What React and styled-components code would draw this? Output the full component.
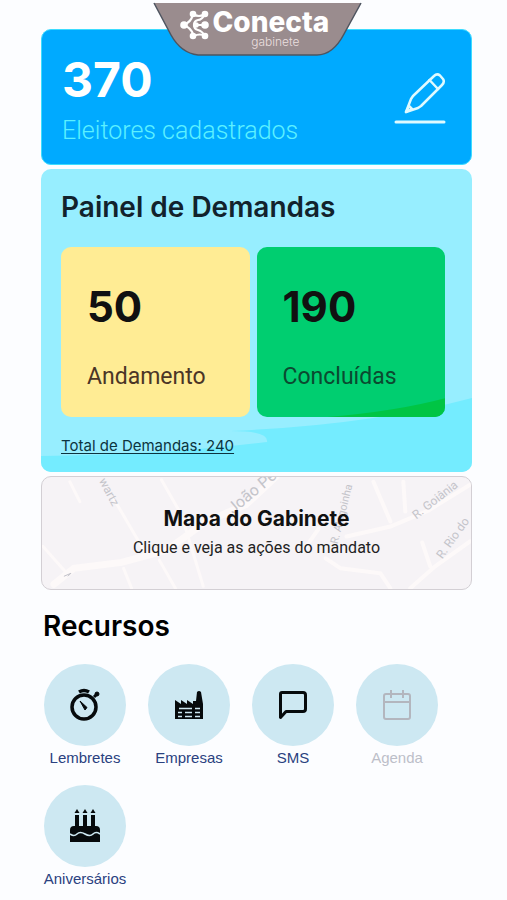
import React from "react";
import styled, { createGlobalStyle } from "styled-components";

const GlobalStyle = createGlobalStyle`
  *, *::before, *::after {
    box-sizing: border-box;
  }

  body {
    margin: 0;
    background: #fcfdff;
    font-family: Inter, "Liberation Sans", sans-serif;
    color: #111;
  }

  h1, h2, p {
    margin: 0;
  }

  button {
    border: 0;
    padding: 0;
    background: none;
    font: inherit;
    color: inherit;
    cursor: pointer;
  }
`;

const Page = styled.main`
  position: relative;
  display: flex;
  flex-direction: column;
  gap: 4px;
  padding: 29px 35px 12px 41px;
`;

const Brand = styled.header`
  position: absolute;
  top: 2px;
  left: 50%;
  width: 212px;
  height: 56px;
  margin-left: -102px;
`;

const BrandShape = styled.svg`
  position: absolute;
  inset: 0;
`;

const BrandText = styled.div`
  position: relative;
  display: flex;
  flex-direction: column;
  padding: 6px 28px 0 61px;
  color: #fff;
`;

const BrandName = styled.span`
  font-size: 28px;
  line-height: 28px;
  font-weight: 800;
`;

const BrandSub = styled.span`
  align-self: flex-end;
  margin-right: 36px;
  font-size: 12px;
  line-height: 12px;
  font-weight: 300;
  color: #eadfdf;
`;

const VotersCard = styled.section`
  display: flex;
  align-items: center;
  justify-content: space-between;
  padding: 22px 25px 15px 20px;
  border: 1px solid #3cdcff;
  border-radius: 10px;
  background: #00aaff;
`;

const VotersCount = styled.p`
  font-size: 48px;
  line-height: 56px;
  font-weight: 700;
  color: #fff;
`;

const VotersLabel = styled.p`
  padding-top: 5px;
  font-family: Roboto, sans-serif;
  font-size: 25px;
  line-height: 36px;
  font-weight: 300;
  color: #5cf0ff;
`;

const Panel = styled.section`
  position: relative;
  padding: 18px 27px 16px 20px;
  border-radius: 10px;
  background: #97eeff;
  overflow: hidden;
`;

const Wave = styled.svg`
  position: absolute;
  inset: 0;
  width: 100%;
  height: 100%;
`;

const PanelTitle = styled.h2`
  position: relative;
  font-size: 28px;
  line-height: 40px;
  font-weight: 600;
  color: #12222c;
`;

const Tiles = styled.div`
  position: relative;
  display: grid;
  grid-template-columns: 1fr 1fr;
  gap: 7px;
  margin: 20px 0 18px;
`;

const Tile = styled.div`
  position: relative;
  display: flex;
  flex-direction: column;
  gap: 26px;
  padding: 34px 26px 22px;
  border-radius: 10px;
  background: ${({ $color }) => $color};
  overflow: hidden;
`;

const TileCount = styled.p`
  position: relative;
  font-size: 42px;
  line-height: 52px;
  font-weight: 700;
`;

const TileLabel = styled.p`
  position: relative;
  font-family: Roboto, sans-serif;
  font-size: 23px;
  line-height: 36px;
  color: ${({ $color }) => $color};
`;

const TotalLink = styled.a`
  position: relative;
  display: inline-block;
  font-size: 15px;
  line-height: 20px;
  color: #0c3440;
  text-underline-offset: 2px;
`;

const MapButton = styled.button`
  && {
    position: relative;
    display: flex;
    flex-direction: column;
    align-items: center;
    padding: 27px 0 27px;
    border: 1px solid #d3cfd4;
    border-radius: 10px;
    background: #f6f3f6;
    overflow: hidden;
  }
`;

const MapArt = styled.svg`
  position: absolute;
  inset: 0;
  width: 100%;
  height: 100%;
`;

const MapTitle = styled.span`
  position: relative;
  font-size: 21px;
  line-height: 30px;
  font-weight: 700;
`;

const MapHint = styled.span`
  position: relative;
  font-family: Roboto, sans-serif;
  font-size: 16px;
  line-height: 28px;
  color: #222;
`;

const ResourcesTitle = styled.h2`
  padding: 12px 2px 18px;
  font-size: 28px;
  line-height: 40px;
  font-weight: 600;
  color: #000;
`;

const Resources = styled.div`
  display: grid;
  grid-template-columns: repeat(4, 82px);
  gap: 17px 22px;
  padding-left: 3px;
`;

const Resource = styled.button`
  && {
    display: flex;
    flex-direction: column;
    align-items: center;
    gap: 2px;
    font-family: "Liberation Sans", Arial, sans-serif;
    font-size: 15px;
    line-height: 20px;
    color: #2a4180;
  }

  &&:disabled {
    color: #bcbfc9;
    cursor: default;
  }
`;

const Circle = styled.span`
  display: flex;
  align-items: center;
  justify-content: center;
  width: 82px;
  height: 82px;
  border-radius: 50%;
  background: #cde8f2;
  color: ${({ $muted }) => ($muted ? "#b3b6be" : "#060a0c")};
`;

const Logo = () => (
  <BrandShape width="212" height="56" viewBox="0 0 212 56" aria-hidden="true">
    <path
      d="M2 1H209L192 32Q181 53 165 53H46Q29 51 19 33Z"
      fill="#9a8c8e"
    />
    <path
      d="M2 1L19 33Q29 51 46 53H165Q181 53 192 32L209 1"
      fill="none"
      stroke="#4e5560"
      strokeWidth="1.500"
    />
    <g stroke="#fff" strokeWidth="2.200" fill="none" strokeLinecap="round">
      <path d="M31 23Q39 21 41 12Q47 16 53 12M31 23Q39 25 42 34Q48 31 53 34" />
      <path d="M53 12Q50 18 46 18Q42 19 42 23Q42 27 46 28Q50 29 53 34M43 23H53" />
    </g>
    <g fill="#fff">
      <circle cx="32" cy="23" r="3.800" />
      <circle cx="41" cy="12" r="3.300" />
      <circle cx="53" cy="12" r="3.300" />
      <circle cx="44" cy="23" r="2.800" />
      <circle cx="53" cy="23" r="3.800" />
      <circle cx="41" cy="34" r="3.300" />
      <circle cx="53" cy="34" r="3.300" />
    </g>
  </BrandShape>
);

const PencilIcon = () => (
  <svg
    width="52"
    height="54"
    viewBox="0 0 52 54"
    fill="none"
    stroke="#dffaff"
    strokeWidth="2.500"
    strokeLinecap="round"
    strokeLinejoin="round"
  >
    <path d="M12 40L17 27L19 24L40 4Q43 1 46 3.500L49 7Q51 10 48 13L27 34L24 36Z" />
    <path d="M35.500 8L44 17M12 40L15 34L18 37Z" />
    <path d="M2 50H50" strokeWidth="3" />
  </svg>
);

const StopwatchIcon = () => (
  <svg width="32" height="34" viewBox="0 0 32 34" fill="none" stroke="currentColor">
    <circle cx="15" cy="19" r="12" strokeWidth="3.500" />
    <path d="M10 4Q15 1 20 4" strokeWidth="3.500" />
    <path d="M25 9L28 6" strokeWidth="3" />
    <circle cx="28" cy="6" r="2" fill="currentColor" />
    <path d="M11 13L18 19.500L16 22Z" fill="currentColor" strokeWidth="1" />
  </svg>
);

const FactoryIcon = () => (
  <svg width="28" height="28" viewBox="0 0 28 28" fill="currentColor">
    <path d="M0 28V9L6 13V9L12 13V9L18 13V10L21 10L22 1Q24 -1 26 1L28 13V28Z" />
    <path
      d="M4 17.500H17M20 17.500H25M3 21.500H7M10 21.500H17M20 21.500H25M3 25.500H7M10 25.500H17M20 25.500H25"
      stroke="#cde8f2"
      strokeWidth="1.500"
    />
  </svg>
);

const MessageIcon = () => (
  <svg width="30" height="30" viewBox="0 0 30 30" fill="none" stroke="currentColor">
    <path
      d="M2.500 27.500V4Q2.500 2.500 4 2.500H25Q27.500 2.500 27.500 5V19Q27.500 21.500 25 21.500H8Z"
      strokeWidth="3"
      strokeLinejoin="round"
    />
  </svg>
);

const CalendarIcon = () => (
  <svg width="30" height="32" viewBox="0 0 30 32" fill="none" stroke="currentColor" strokeWidth="2">
    <rect x="2" y="5" width="26" height="25" rx="2" />
    <path d="M2 13H28M9 1V9M21 1V9" />
  </svg>
);

const CakeIcon = () => (
  <svg width="30" height="34" viewBox="0 0 30 34" fill="currentColor">
    <path d="M0 33V21Q0 17 4 17H5V6H9V17H13V6H17V17H21V6H25V17H26Q30 17 30 21V33Z" />
    <path d="M7 0L9.500 4H4.500ZM15 0L17.500 4H12.500ZM23 0L25.500 4H20.500Z" />
    <path
      d="M0 25Q4 28 7 25T15 25T23 25T30 25"
      fill="none"
      stroke="#cde8f2"
      strokeWidth="1.600"
    />
  </svg>
);

const Streets = () => (
  <MapArt viewBox="0 0 431 113" preserveAspectRatio="xMidYMid slice" aria-hidden="true">
    <g fill="none" stroke="#fdf9f9" strokeLinecap="round">
      <path d="M12 108L32 92L80 86L125 74L165 45L205 28L235 0" strokeWidth="7" />
      <path d="M28 5L38 25M1 70L24 96M72 22L106 80M82 92L90 112" strokeWidth="3" />
      <path d="M120 3L140 38L162 110M118 84L134 112" strokeWidth="3" />
      <path d="M306 60L350 50L388 34L430 8M333 5L350 45M363 5L365 35" strokeWidth="4" />
      <path d="M285 82L300 92L340 97L350 112M370 112L395 90L430 65M382 66L390 90M262 75L278 52" strokeWidth="4" />
    </g>
    <g fill="#c4c4ca" fontFamily="Roboto, sans-serif">
      <text fontSize="12" transform="translate(57 4) rotate(62)">
        wartz
      </text>
      <text fontSize="16" transform="translate(192 38) rotate(-40)">
        João Pe
      </text>
      <text fontSize="11" transform="translate(297 68) rotate(-76)">
        R. Alagoinha
      </text>
      <text fontSize="12" transform="translate(376 43) rotate(-38)">
        R. Goiânia
      </text>
      <text fontSize="12" transform="translate(402 83) rotate(-54)">
        R. Rio do
      </text>
    </g>
    <path d="M22 100L29 97L26 100" fill="none" stroke="#c0c0c8" />
  </MapArt>
);

const resources = [
  { label: "Lembretes", icon: <StopwatchIcon /> },
  { label: "Empresas", icon: <FactoryIcon /> },
  { label: "SMS", icon: <MessageIcon /> },
  { label: "Agenda", icon: <CalendarIcon />, disabled: true },
  { label: "Aniversários", icon: <CakeIcon /> },
];

export default function App() {
  return (
    <>
      <GlobalStyle />
      <Page>
        <VotersCard>
          <div>
            <VotersCount>370</VotersCount>
            <VotersLabel>Eleitores cadastrados</VotersLabel>
          </div>
          <button type="button" aria-label="Editar eleitores">
            <PencilIcon />
          </button>
        </VotersCard>

        <Panel>
          <Wave viewBox="0 0 431 303" preserveAspectRatio="none" aria-hidden="true">
            <path d="M0 287Q120 286 226 273Q228 262 190 262Q330 256 431 229V303H0Z" fill="#74ecff" />
          </Wave>
          <PanelTitle>Painel de Demandas</PanelTitle>
          <Tiles>
            <Tile $color="#ffec94">
              <TileCount>50</TileCount>
              <TileLabel $color="#4b3526">Andamento</TileLabel>
            </Tile>
            <Tile $color="#00ce70">
              <Wave viewBox="0 0 188 170" preserveAspectRatio="none" aria-hidden="true">
                <path d="M70 170Q140 164 188 151V170Z" fill="#00c544" />
              </Wave>
              <TileCount>190</TileCount>
              <TileLabel $color="#0b4a30">Concluídas</TileLabel>
            </Tile>
          </Tiles>
          <TotalLink href="#demandas">Total de Demandas: 240</TotalLink>
        </Panel>

        <MapButton type="button">
          <Streets />
          <MapTitle>Mapa do Gabinete</MapTitle>
          <MapHint>Clique e veja as ações do mandato</MapHint>
        </MapButton>

        <section>
          <ResourcesTitle>Recursos</ResourcesTitle>
          <Resources>
            {resources.map(({ label, icon, disabled }) => (
              <Resource key={label} type="button" disabled={disabled}>
                <Circle $muted={disabled}>{icon}</Circle>
                {label}
              </Resource>
            ))}
          </Resources>
        </section>

        <Brand>
          <Logo />
          <BrandText>
            <BrandName>Conecta</BrandName>
            <BrandSub>gabinete</BrandSub>
          </BrandText>
        </Brand>
      </Page>
    </>
  );
}
